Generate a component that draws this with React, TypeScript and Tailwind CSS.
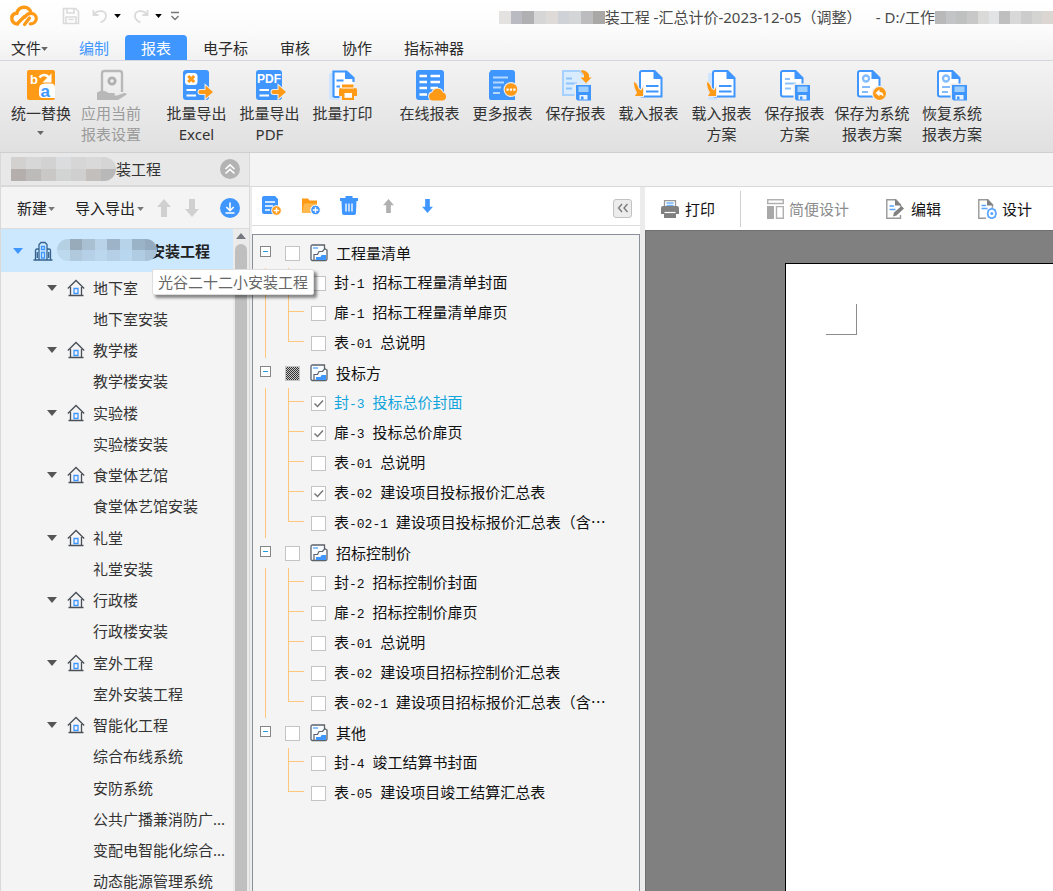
import type { ReactNode } from "react";

const BLUE = "#4096ff";
const ORANGE = "#ff9a16";

/* ---------- ribbon icons (32 x 32) ---------- */

function Icon32({ children }: { children: ReactNode }) {
  return (
    <svg viewBox="0 0 32 32" className="h-8 w-8 shrink-0" fill="none" aria-hidden="true">
      {children}
    </svg>
  );
}

function ExportArrow() {
  return (
    <path
      d="M19.500 21h5v-4.500l7.500 6.500-7.500 6.500V25h-5a2 2 0 0 1 0-4z"
      fill={ORANGE}
      stroke="#ececec"
      strokeWidth="2"
      paintOrder="stroke"
    />
  );
}

function Floppy({ x, y }: { x: number; y: number }) {
  return (
    <g transform={`translate(${x} ${y})`}>
      <path d="M-1.5-1.5h18v18h-18z" fill="#ebebeb" />
      <path d="M0 0h15v15.500H1.500L0 14z" fill={BLUE} />
      <path d="M2.500 1.500h10v5.500h-10z" fill="#9fcfff" />
      <path d="M3.500 10h8v4.500h-8z" fill="#e8f3ff" />
      <path d="M5 11.500h2.500v3H5z" fill={BLUE} />
    </g>
  );
}

function PageOutline({ x = 3 }: { x?: number }) {
  return (
    <g transform={`translate(${x} 0)`}>
      <path d="M4 2h12.500L23.500 9V27.500H4a2 2 0 0 1-2-2V4a2 2 0 0 1 2-2z" fill="#fff" stroke={BLUE} strokeWidth="2" />
      <path d="M15.500 1.500v8.500h9z" fill={BLUE} />
    </g>
  );
}

const IconReplace = () => (
  <Icon32>
    <rect x="2" y="1" width="28" height="30" rx="2" fill={ORANGE} />
    <text x="5" y="14.500" fontSize="13" fontWeight="700" fontFamily="Liberation Sans, sans-serif" fill="#fff">
      b
    </text>
    <path d="M14.500 8.500c2-3 6-3.500 9-.5" stroke="#fff" strokeWidth="2.600" />
    <path d="M26.500 4.500v9h-9z" fill="#fff" />
    <path d="M20 14.500h6q4 0 4 4V29H18q-4 0-4-4v-4.500q0-6 6-6z" fill="#fff" />
    <text x="15.500" y="27.500" fontSize="17" fontWeight="700" fontFamily="Liberation Sans, sans-serif" fill={BLUE}>
      a
    </text>
  </Icon32>
);

const IconApply = () => (
  <Icon32>
    <path d="M7 22V4.500Q7 2 9.500 2h15Q27 2 27 4.500V23" stroke="#b8b8b8" strokeWidth="2.400" />
    <circle cx="17" cy="12" r="3.200" stroke="#b0b0b0" strokeWidth="2.800" />
    <path
      d="M2 23.500c4-2.500 8-2 11.500.5h5.500q2 1.200 0 2.500h3l7-2.500q4 0 2 2L23 31H2z"
      fill="#b8b8b8"
    />
  </Icon32>
);

const IconExcel = () => (
  <Icon32>
    <rect x="2" y="1" width="26" height="30" rx="3" fill={BLUE} />
    <rect x="4" y="4" width="12.500" height="12" rx="3.500" fill="#fff" />
    <path d="M7.200 7l6 6M13.200 7l-6 6" stroke={ORANGE} strokeWidth="3" />
    <path d="M5.500 21H15M5.500 26.500H15" stroke="#fff" strokeWidth="2" />
    <ExportArrow />
  </Icon32>
);

const IconPdf = () => (
  <Icon32>
    <rect x="2" y="1" width="26" height="30" rx="3" fill={BLUE} />
    <text x="3" y="14" fontSize="12" fontWeight="700" fontFamily="Liberation Sans, sans-serif" fill="#fff">
      PDF
    </text>
    <path d="M5.500 21H15M5.500 26.500H15" stroke="#fff" strokeWidth="2" />
    <ExportArrow />
  </Icon32>
);

const IconPrint = () => (
  <Icon32>
    <path d="M3 4h9v27H5q-3 0-3-3V5z" fill="#cfe5ff" />
    <path d="M6 2.500h13.500L26.500 9v18H6z" fill="#fff" />
    <path d="M6.500 28V2.500h13L26.500 9v4M6.500 28h6" stroke={BLUE} strokeWidth="2.200" />
    <path d="M18 1.500V10h9z" fill={BLUE} />
    <path d="M9.500 11.500h7M9.500 17.500h3.500" stroke={BLUE} strokeWidth="2" />
    <path d="M15 15.500h11.500V19H28q2 0 2 2v6h-3v4H15v-4h-3v-6q0-2 2-2h1z" fill={ORANGE} />
    <path d="M14.500 19h12.500" stroke="#fff" strokeWidth="1" />
    <path d="M17.500 24h7.500v4.800h-7.500z" fill="#fff" />
  </Icon32>
);

const IconOnline = () => (
  <Icon32>
    <rect x="2" y="1" width="28" height="30" rx="3" fill={BLUE} />
    <path d="M5.500 7H13M16.500 7H26M5.500 13H13M16.500 13H26M5.500 19H13M16.500 19H24M5.500 25.500H13" stroke="#fff" strokeWidth="2.400" />
    <path
      d="M19 31.500a4 4 0 0 1-.8-7.900 5.600 5.600 0 0 1 10.600 0A4 4 0 0 1 28.500 31.500z"
      fill={ORANGE}
      stroke="#ececec"
      strokeWidth="2"
      paintOrder="stroke"
    />
  </Icon32>
);

const IconMore = () => (
  <Icon32>
    <path d="M4 1h21q3 0 3 3v27H4q-2 0-2-2V4l2-3z" fill={BLUE} />
    <path d="M6 8.500h15M6 13.500h11M6 18.500h8M6 24h7" stroke="#b5d8ff" strokeWidth="2" />
    <circle cx="24" cy="20.500" r="7.500" fill="#ececec" />
    <circle cx="24" cy="20.500" r="6.300" fill={ORANGE} />
    <path d="M19.500 19.500h2.200v2.200h-2.200zM22.900 19.500h2.200v2.200h-2.200zM26.300 19.500h2.200v2.200h-2.200z" fill="#fff" />
  </Icon32>
);

const IconSave = () => (
  <Icon32>
    <path d="M3 2h17l6 6v18H3z" fill="#d9ecff" stroke="#a6d0ff" strokeWidth="2" />
    <path d="M6 9.500h6M6 14.500h11M6 19.500h6" stroke="#8cc3ff" strokeWidth="2" />
    <path d="M22 1q8 1.500 7 7.500h2.500L26 14l-5.500-5.500H24q.5-4-3-6z" fill={ORANGE} stroke="#ececec" strokeWidth="1" paintOrder="stroke" />
    <Floppy x={16} y={16} />
  </Icon32>
);

const LoadArrow = () => (
  <path
    d="M1 13q3 1 4.500 6.500L8 21.500l2-3V27H2l2-3.500Q1 19 1 13z"
    fill={ORANGE}
    stroke="#ececec"
    strokeWidth="2"
    paintOrder="stroke"
  />
);

const IconLoad = () => (
  <Icon32>
    <PageOutline x={5} />
    <path d="M13 17h12.500M13 22.500h12.500" stroke={BLUE} strokeWidth="2.200" />
    <LoadArrow />
  </Icon32>
);

const IconLoadPlan = () => (
  <Icon32>
    <path d="M3 4h8v27H4q-2 0-2-2V5z" fill="#cfe5ff" />
    <PageOutline x={5} />
    <path d="M13 17h12.500M13 22.500h12.500" stroke={BLUE} strokeWidth="2.200" />
    <LoadArrow />
  </Icon32>
);

const IconSavePlan = () => (
  <Icon32>
    <PageOutline x={0} />
    <path d="M6 10h5M6 14.500h11M6 19.500h6" stroke="#8cc3ff" strokeWidth="2" />
    <Floppy x={16} y={16} />
  </Icon32>
);

const Dial = () => (
  <g stroke="#84bdff">
    <circle cx="10" cy="9.500" r="3" strokeWidth="2.300" />
    <path d="M6 18h8M6 23h6" strokeWidth="2" />
  </g>
);

const IconSaveSystem = () => (
  <Icon32>
    <PageOutline x={0} />
    <Dial />
    <circle cx="23.500" cy="24.500" r="7.800" fill="#ececec" />
    <circle cx="23.500" cy="24.500" r="6.500" fill={ORANGE} />
    <path d="M19.500 24l4-3.500v2.200q4 .3 4 4.800-1.500-2-4-1.800v1.800z" fill="#fff" />
  </Icon32>
);

const IconRestore = () => (
  <Icon32>
    <PageOutline x={0} />
    <Dial />
    <Floppy x={16} y={16} />
  </Icon32>
);

/* ---------- small shared pieces ---------- */

function Caret({ className }: { className: string }) {
  return (
    <svg viewBox="0 0 10 6" className={className} fill="currentColor" aria-hidden="true">
      <path d="M0 0h10L5 6z" />
    </svg>
  );
}

function Mosaic({ rows, className }: { rows: string[][]; className: string }) {
  return (
    <div className={className} aria-hidden="true">
      {rows.map((row, r) => (
        <div key={r} className="flex flex-1">
          {row.map((c, i) => (
            <div key={i} className="flex-1" style={{ backgroundColor: c }} />
          ))}
        </div>
      ))}
    </div>
  );
}

type Action = { icon: ReactNode; lines: string[]; disabled?: boolean; caret?: boolean };

function RibbonButton({ action, width }: { action: Action; width: string }) {
  return (
    <button
      type="button"
      disabled={action.disabled}
      className={`flex flex-col items-center gap-[2px] whitespace-nowrap pt-2 leading-[21px] ${width} ${
        action.disabled ? "text-[#9b9b9b]" : "text-[#333]"
      }`}
    >
      {action.icon}
      <span className="flex flex-col items-center">
        {action.lines.map((l) => (
          <span key={l}>{l}</span>
        ))}
        {action.caret && <Caret className="mt-[7px] h-1 w-[7px] text-[#666]" />}
      </span>
    </button>
  );
}

const setup: Action[] = [
  { icon: <IconReplace />, lines: ["统一替换"], caret: true },
  { icon: <IconApply />, lines: ["应用当前", "报表设置"], disabled: true },
];
const exporting: Action[] = [
  { icon: <IconExcel />, lines: ["批量导出", "Excel"] },
  { icon: <IconPdf />, lines: ["批量导出", "PDF"] },
  { icon: <IconPrint />, lines: ["批量打印"] },
];
const reports: Action[] = [
  { icon: <IconOnline />, lines: ["在线报表"] },
  { icon: <IconMore />, lines: ["更多报表"] },
  { icon: <IconSave />, lines: ["保存报表"] },
  { icon: <IconLoad />, lines: ["载入报表"] },
  { icon: <IconLoadPlan />, lines: ["载入报表", "方案"] },
  { icon: <IconSavePlan />, lines: ["保存报表", "方案"] },
];
const system: Action[] = [
  { icon: <IconSaveSystem />, lines: ["保存为系统", "报表方案"] },
  { icon: <IconRestore />, lines: ["恢复系统", "报表方案"] },
];

/* ---------- header ---------- */

function TitleBar() {
  return (
    <div className="flex h-8 items-center">
      <svg viewBox="0 0 28 22" className="ml-[10px] h-[22px] w-7" fill="none" stroke={ORANGE} strokeLinecap="round" aria-label="logo">
        <path
          d="M7.500 19C3.500 18.500 1.800 16 1.800 13.500c0-3 2-5 5-5.200C7.500 4.500 10.500 2.200 14 2.200c3.800 0 6.300 2.500 6.800 5.600"
          strokeWidth="3.400"
        />
        <path d="M7.500 18.500L14.500 11.500" strokeWidth="3.400" />
        <path
          d="M14.500 19.500l5-6.500M15 12c1.500-2.500 3.500-3.700 6-3.700 3 0 5.300 2.200 5.300 5.200 0 3.200-2.500 5.500-6 5.300"
          strokeWidth="3.200"
        />
      </svg>
      <button type="button" aria-label="保存" className="ml-6 text-[#dadada]">
        <svg viewBox="0 0 18 18" className="h-[18px] w-[18px]" fill="none" stroke="currentColor" strokeWidth="1.600">
          <path d="M1.500 1.500h12l3 3v12h-15zM5 2v4h7V2M4 16v-6h10v6M6.500 12.500h5" />
        </svg>
      </button>
      <button type="button" aria-label="撤销" className="ml-3 flex items-center gap-[6px] text-[#dadada]">
        <svg viewBox="0 0 16 16" className="h-4 w-4" fill="none" stroke="currentColor" strokeWidth="1.800">
          <path d="M1.500 2v5h5M2 7c3-5.500 12-5 12 1 0 3-2 5-5.500 6.500" />
        </svg>
        <Caret className="h-1 w-[7px] text-black" />
      </button>
      <button type="button" aria-label="重做" className="ml-3 flex items-center gap-[6px] text-[#dadada]">
        <svg viewBox="0 0 16 16" className="h-4 w-4" fill="none" stroke="currentColor" strokeWidth="1.800">
          <path d="M14.500 2v5h-5M14 7C11 1.500 2 2 2 8c0 3 2 5 5.500 6.500" />
        </svg>
        <Caret className="h-1 w-[7px] text-black" />
      </button>
      <button type="button" aria-label="自定义快速访问" className="ml-2 text-[#777]">
        <svg viewBox="0 0 10 10" className="h-[10px] w-[10px]" fill="none" stroke="currentColor" strokeWidth="1.400">
          <path d="M1 1.500h8M1.500 5L5 8.500 8.500 5" />
        </svg>
      </button>
      <div className="ml-auto flex items-center whitespace-nowrap pt-[2px] text-[#4a4a4a]">
        <Mosaic
          className="flex h-[13px] w-[106px] flex-col"
          rows={[["#e4e2e0", "#b9bac2", "#b0afb2", "#d6d6d6", "#dedad8", "#cfd3d8", "#d3d5d7", "#bcbcbe", "#a9a8a7"]]}
        />
        <h1 className="w-[271px]">装工程 -汇总计价-2023-12-05（调整）</h1>
        <span>- D:/工作</span>
        <Mosaic
          className="flex h-[13px] w-[118px] flex-col"
          rows={[["#b9b9ba", "#c3c4c6", "#bfc0c0", "#c8c8c8", "#dadad8", "#e2e3e4", "#bfbfbf", "#d8d8d9", "#cccccd", "#d4d4d2", "#dcd6d2"]]}
        />
      </div>
    </div>
  );
}

function MenuTabs() {
  return (
    <nav className="flex h-[29px] items-end border-b border-[#d4d8de] text-[#2b2b2b]">
      <button type="button" className="flex h-[25px] w-[63px] items-center pl-[11px]">
        文件
        <Caret className="mt-[2px] h-1 w-[7px] text-[#666]" />
      </button>
      <button type="button" className="h-[25px] px-4 text-[#4096ff]">编制</button>
      <button type="button" aria-current="page" className="h-[25px] rounded-t-[4px] bg-[#4096ff] px-4 text-white">
        报表
      </button>
      {["电子标", "审核", "协作", "指标神器"].map((t) => (
        <button key={t} type="button" className="h-[25px] px-4">
          {t}
        </button>
      ))}
    </nav>
  );
}

function Ribbon() {
  return (
    <div className="flex h-[92px] items-start border-b border-[#cfcfcf] bg-linear-to-b from-[#f3f3f3] to-[#e0e0e0] pl-[6px]">
      <div className="flex">{setup.map((a, i) => <RibbonButton key={i} action={a} width="w-[70px]" />)}</div>
      <div className="ml-[14px] flex">{exporting.map((a, i) => <RibbonButton key={i} action={a} width="w-[73px]" />)}</div>
      <div className="ml-[14px] flex">{reports.map((a, i) => <RibbonButton key={i} action={a} width="w-[73px]" />)}</div>
      <div className="ml-px flex">{system.map((a, i) => <RibbonButton key={i} action={a} width="w-20" />)}</div>
    </div>
  );
}

/* ---------- project tree (left) ---------- */

const projects: { name: string; parent?: boolean }[] = [
  { name: "地下室", parent: true },
  { name: "地下室安装" },
  { name: "教学楼", parent: true },
  { name: "教学楼安装" },
  { name: "实验楼", parent: true },
  { name: "实验楼安装" },
  { name: "食堂体艺馆", parent: true },
  { name: "食堂体艺馆安装" },
  { name: "礼堂", parent: true },
  { name: "礼堂安装" },
  { name: "行政楼", parent: true },
  { name: "行政楼安装" },
  { name: "室外工程", parent: true },
  { name: "室外安装工程" },
  { name: "智能化工程", parent: true },
  { name: "综合布线系统" },
  { name: "安防系统" },
  { name: "公共广播兼消防广..." },
  { name: "变配电智能化综合..." },
  { name: "动态能源管理系统" },
];

const HomeIcon = () => (
  <svg viewBox="0 0 18 18" className="h-[18px] w-[18px]" fill="none" aria-hidden="true">
    <path d="M.8 9.500L9 1.500l8.200 8M3.500 8v8.500M14.500 8v8.500M1.500 16.500h15" stroke="#4a4f57" strokeWidth="1.300" />
    <path d="M7 9.500h4v5H7z" stroke={BLUE} strokeWidth="1.300" />
  </svg>
);

const BuildingIcon = () => (
  <svg viewBox="0 0 20 20" className="h-5 w-5" fill="none" aria-hidden="true">
    <path d="M.5 19h19M2.500 19V9.500Q2.500 8 4 8h2M14 8h2q1.500 0 1.500 1.500V19M6 19V3.500L8 1.500h4l2 2V19M4.300 11v6M15.700 11v6" stroke="#35618f" strokeWidth="1.300" />
    <path d="M8.500 5.500h3v3h-3zM8.500 11.500h3v5.500h-3z" stroke={BLUE} strokeWidth="1.300" />
  </svg>
);

function BlockArrow({ down, className }: { down?: boolean; className: string }) {
  return (
    <svg viewBox="0 0 14 18" className={className} fill="currentColor" aria-hidden="true">
      {down ? <path d="M4 0h6v10h4l-7 8-7-8h4z" /> : <path d="M4 18h6V8h4L7 0 0 8h4z" />}
    </svg>
  );
}

function ProjectPanel() {
  return (
    <aside className="flex w-[250px] shrink-0 flex-col border-x border-[#d9d9d9] bg-[#f4f4f4]">
      <div className="flex h-[34px] shrink-0 items-center border-b-2 border-[#d9d9d9] bg-[#e8e8e8] pl-[10px] text-[#333]">
        <Mosaic
          className="flex h-6 w-[105px] flex-col overflow-hidden rounded-r-full"
          rows={[
            ["#d2d1d0", "#d7d7d7", "#d3d2d2", "#dbdcdd", "#d6d6d6", "#d9d9d9", "#d5d5d5"],
            ["#b4afac", "#bdbbb9", "#c9c8c7", "#d2d3d3", "#cfcfd0", "#c2bfbd", "#b9b8b8"],
          ]}
        />
        <span>装工程</span>
        <button type="button" aria-label="收起" className="ml-auto mr-[9px]">
          <svg viewBox="0 0 20 20" className="h-5 w-5" fill="none" aria-hidden="true">
            <circle cx="10" cy="10" r="10" fill="#b3b3b3" />
            <path d="M5.500 10L10 5.800l4.500 4.200M5.500 14.500L10 10.300l4.500 4.200" stroke="#fff" strokeWidth="1.600" />
          </svg>
        </button>
      </div>
      <div className="flex h-[42px] shrink-0 items-center border-b border-[#dcdcdc] pl-4 text-[#222]">
        <button type="button" className="flex items-center gap-px">
          新建
          <Caret className="mt-[2px] h-1 w-[7px] text-[#777]" />
        </button>
        <button type="button" className="ml-5 flex items-center gap-[2px]">
          导入导出
          <Caret className="mt-[2px] h-1 w-[7px] text-[#777]" />
        </button>
        <button type="button" aria-label="上移" className="ml-[13px] text-[#d0d0d0]"><BlockArrow className="h-[18px] w-[14px]" /></button>
        <button type="button" aria-label="下移" className="ml-[14px] text-[#d0d0d0]"><BlockArrow down className="h-[18px] w-[14px]" /></button>
        <button type="button" aria-label="下载" className="ml-auto mr-[9px]">
          <svg viewBox="0 0 20 20" className="h-5 w-5" fill="none" aria-hidden="true">
            <circle cx="10" cy="10" r="10" fill={BLUE} />
            <path d="M10 4.500v8M6.300 9l3.700 3.700L13.700 9M5.500 15h9" stroke="#fff" strokeWidth="1.600" />
          </svg>
        </button>
      </div>
      <div className="flex min-h-0 flex-1 overflow-hidden">
        <div className="min-w-0 flex-1">
          <div className="relative flex h-[43px] items-center bg-[#cce8ff] pl-3 font-bold text-[#222]">
            <Caret className="h-[6px] w-[10px] text-[#4096ff]" />
            <span className="ml-[10px]"><BuildingIcon /></span>
            <span className="ml-auto mr-[23px]">安装工程</span>
            <Mosaic
              className="absolute left-[56px] top-[10px] flex h-[22px] w-[100px] flex-col overflow-hidden rounded-full"
              rows={[
                ["#b5cfe3", "#98abbb", "#a9bfd2", "#b9d2e7", "#9db4c8", "#b7d3ea", "#9bb3c7", "#94abbf"],
                ["#bcd9ee", "#b0c9dd", "#b6d1e7", "#bad7ee", "#b4cfe6", "#b8d6ee", "#b0cce2", "#a9c2d8"],
              ]}
            />
          </div>
          <ul className="grid h-[625px] auto-rows-fr text-[#333]">
            {projects.map((p) => (
              <li key={p.name} className="flex items-center whitespace-nowrap">
                <span className="flex w-[92px] shrink-0 items-center pl-[46px]">
                  {p.parent && (
                    <>
                      <Caret className="h-[6px] w-[10px] text-[#555]" />
                      <span className="ml-[10px]"><HomeIcon /></span>
                    </>
                  )}
                </span>
                {p.name}
              </li>
            ))}
          </ul>
        </div>
        <div className="flex w-4 flex-col items-center bg-[#ebebeb] pt-1" aria-hidden="true">
          <svg viewBox="0 0 10 6" className="h-[6px] w-[10px]" fill="#75797f"><path d="M5 0l5 6H0z" /></svg>
          <div className="mt-[5px] w-3 flex-1 rounded-t-full bg-[#bfbfbf]" />
        </div>
      </div>
    </aside>
  );
}

/* ---------- report tree (middle) ---------- */

type Report = { head: string; code: string; title: string; checked?: boolean; active?: boolean };
type Group = { name: string; mixed?: boolean; items: Report[] };

const groups: Group[] = [
  {
    name: "工程量清单",
    items: [
      { head: "封", code: "-1", title: "招标工程量清单封面" },
      { head: "扉", code: "-1", title: "招标工程量清单扉页" },
      { head: "表", code: "-01", title: "总说明" },
    ],
  },
  {
    name: "投标方",
    mixed: true,
    items: [
      { head: "封", code: "-3", title: "投标总价封面", checked: true, active: true },
      { head: "扉", code: "-3", title: "投标总价扉页", checked: true },
      { head: "表", code: "-01", title: "总说明" },
      { head: "表", code: "-02", title: "建设项目投标报价汇总表", checked: true },
      { head: "表", code: "-02-1", title: "建设项目投标报价汇总表（含⋯" },
    ],
  },
  {
    name: "招标控制价",
    items: [
      { head: "封", code: "-2", title: "招标控制价封面" },
      { head: "扉", code: "-2", title: "招标控制价扉页" },
      { head: "表", code: "-01", title: "总说明" },
      { head: "表", code: "-02", title: "建设项目招标控制价汇总表" },
      { head: "表", code: "-02-1", title: "建设项目招标报价汇总表（含⋯" },
    ],
  },
  {
    name: "其他",
    items: [
      { head: "封", code: "-4", title: "竣工结算书封面" },
      { head: "表", code: "-05", title: "建设项目竣工结算汇总表" },
    ],
  },
];

function TickBox({ checked, mixed }: { checked?: boolean; mixed?: boolean }) {
  return (
    <span className="relative flex h-[15px] w-[15px] shrink-0">
      <input
        type="checkbox"
        defaultChecked={checked}
        className={`peer h-[15px] w-[15px] appearance-none border border-[#c4c4c4] ${
          mixed ? "bg-[repeating-conic-gradient(#333_0_25%,#c9c9c9_0_50%)] bg-[length:2px_2px]" : "bg-white"
        }`}
      />
      <svg
        viewBox="0 0 15 15"
        className="pointer-events-none absolute inset-0 hidden h-[15px] w-[15px] peer-checked:block"
        fill="none"
        stroke="#777"
        strokeWidth="1.500"
        aria-hidden="true"
      >
        <path d="M3.500 7.500l3 3 5.500-6" />
      </svg>
    </span>
  );
}

const ReportIcon = () => (
  <svg viewBox="0 0 18 18" className="h-[18px] w-[18px]" fill="none" aria-hidden="true">
    <path d="M1 2.500Q1 1 2.500 1H14.500v3.500L17 6v9q0 1.500-1.500 1.500h-13Q1 16.500 1 15z" fill="#f8fbff" stroke="#5c626a" strokeWidth="1.300" />
    <path d="M3 4h5" stroke="#8fc4ff" strokeWidth="2" />
    <path d="M4 16v-5.500h3.500L9 7.500h3.500L15 4.500" stroke="#5c626a" strokeWidth="1.200" />
    <path d="M6 16v-3h4.500l1-2H16v5z" fill={BLUE} />
  </svg>
);

function ReportPanel() {
  return (
    <section className="flex w-[388px] shrink-0 flex-col bg-white">
      <div className="flex h-[39px] shrink-0 items-center border-b border-[#dcdcdc] pl-[10px] pr-2">
        <button type="button" aria-label="新建报表">
          <svg viewBox="0 0 20 20" className="h-5 w-5" fill="none">
            <path d="M2 0h11l3 3v15H2q-2 0-2-2V2q0-2 2-2z" fill={BLUE} />
            <path d="M3 6h10M3 10h8M3 14h5" stroke="#fff" strokeWidth="1.300" />
            <circle cx="14.500" cy="14.500" r="4.800" fill={ORANGE} stroke="#fff" />
            <path d="M14.500 11.800v5.400M11.800 14.500h5.400" stroke="#fff" strokeWidth="1.400" />
          </svg>
        </button>
        <button type="button" aria-label="新建文件夹" className="ml-5">
          <svg viewBox="0 0 20 20" className="h-5 w-5" fill="none">
            <path d="M0 2.500h6l1.500 2H15V17H0z" fill={ORANGE} />
            <path d="M2 7.500h13V17H0z" fill="#ffb84d" />
            <circle cx="13.500" cy="14" r="4.800" fill={BLUE} stroke="#fff" />
            <path d="M13.500 11.300v5.400M10.800 14h5.400" stroke="#fff" strokeWidth="1.400" />
          </svg>
        </button>
        <button type="button" aria-label="删除" className="ml-[17px]">
          <svg viewBox="0 0 20 20" className="h-5 w-5" fill="none">
            <path d="M1 2h5.500V0h7v2H19v3H1z" fill={BLUE} />
            <path d="M2.500 5h15l-.5 12q0 2-2 2H5q-2 0-2-2z" fill={BLUE} />
            <path d="M7 7.500v8M10 7.500v8M13 7.500v8" stroke="#fff" strokeWidth="1.300" />
          </svg>
        </button>
        <button type="button" aria-label="上移" className="ml-6 text-[#b0b0b0]"><BlockArrow className="h-[14px] w-[11px]" /></button>
        <button type="button" aria-label="下移" className="ml-7 text-[#4096ff]"><BlockArrow down className="h-[14px] w-[11px]" /></button>
        <button
          type="button"
          aria-label="折叠面板"
          className="ml-auto mt-1 grid h-[19px] w-[19px] place-items-center rounded-[3px] border border-[#c2c2c2] bg-[#ececec]"
        >
          <svg viewBox="0 0 12 10" className="h-[10px] w-3" fill="none" stroke="#777" strokeWidth="1.300">
            <path d="M5 1L1.500 5 5 9M10.500 1L7 5l3.500 4" />
          </svg>
        </button>
      </div>
      <div className="mt-2 min-h-0 flex-1 overflow-hidden border border-b-0 border-[#8a8f99] bg-[#f4f4f4] pt-[3px] text-[#111]">
        {groups.map((g, gi) => (
          <div key={g.name}>
            <div className="flex h-[30px] items-center pl-[7px]">
              <button
                type="button"
                aria-label={`折叠${g.name}`}
                className="mb-[3px] grid h-[11px] w-[11px] place-items-center border border-[#858585] bg-white"
              >
                <span className="h-px w-[5px] bg-[#1e9be0]" />
              </button>
              <label className="ml-[14px] flex items-center">
                <TickBox mixed={g.mixed} />
                <span className="ml-[10px]"><ReportIcon /></span>
                <span className="ml-2">{g.name}</span>
              </label>
            </div>
            <div className="flex pl-3">
              <span className={`w-px ${gi < groups.length - 1 ? "bg-[#ffc67c]" : ""}`} aria-hidden="true" />
              <ul className="pl-[22px]">
                {g.items.map((it, i) => (
                  <li key={it.head + it.code} className="flex h-[30px] items-center">
                    <span className="flex h-[30px] w-4" aria-hidden="true">
                      <span className={`w-px bg-[#ffc67c] ${i < g.items.length - 1 ? "h-[30px]" : "h-[14px]"}`} />
                      <span className="mt-[13px] h-px flex-1 bg-[#ffc67c]" />
                    </span>
                    <label className={`ml-[7px] flex items-center whitespace-nowrap ${it.active ? "text-[#12a5dc]" : ""}`}>
                      <TickBox checked={it.checked} />
                      <span className="ml-2">
                        {it.head}
                        <span className="font-['Liberation_Mono',monospace] text-[13px]">{it.code} </span>
                        {it.title}
                      </span>
                    </label>
                  </li>
                ))}
              </ul>
            </div>
          </div>
        ))}
      </div>
    </section>
  );
}

/* ---------- preview (right) ---------- */

function PreviewPanel() {
  return (
    <main className="flex min-w-0 flex-1 flex-col">
      <div className="flex h-[43px] shrink-0 items-center overflow-hidden whitespace-nowrap bg-white pl-4 text-[#111]">
        <button type="button" className="flex items-center gap-[6px]">
          <svg viewBox="0 0 18 18" className="h-[18px] w-[18px]" fill="none" aria-hidden="true">
            <path d="M3.500 6V.7h11V6" stroke="#999" strokeWidth="1.300" />
            <path d="M5.500 3h7M5.500 5.500h7" stroke="#6fb1ff" strokeWidth="1.300" />
            <path d="M2 6h14q2 0 2 2v6h-3v4H3v-4H0V8q0-2 2-2z" fill="#808080" />
            <path d="M3.500 12.500h11" stroke="#fff" strokeWidth="1.200" />
          </svg>
          打印
        </button>
        <span className="ml-[25px] h-9 w-px bg-[#d0d0d0]" />
        <button type="button" disabled className="ml-[26px] flex items-center gap-[5px] text-[#8c8c8c]">
          <svg viewBox="0 0 17 20" className="h-5 w-[17px]" fill="none" stroke="#b0b0b0" strokeWidth="1.400" aria-hidden="true">
            <path d="M.7.700h15.600v3.800H.7zM9.500 7.600h6.800v11.700H9.500z" />
            <path d="M0 7h7v13H0z" fill="#a8a8a8" stroke="none" />
          </svg>
          简便设计
        </button>
        <button type="button" className="ml-[37px] flex items-center gap-[7px]">
          <svg viewBox="0 0 18 20" className="h-5 w-[18px]" fill="none" aria-hidden="true">
            <path d="M14.500 16v3.300H.8V.8h9l4.700 5v2" stroke="#999" strokeWidth="1.400" />
            <path d="M9 0v6.500h6.500z" fill="#808080" />
            <path d="M3.500 7H8M3.500 10.500h6" stroke="#5aa5ff" strokeWidth="1.500" />
            <path d="M7 17.500l1-4L15.500 7 18 9.500l-7.500 7z" fill="#808080" />
          </svg>
          编辑
        </button>
        <button type="button" className="ml-[37px] flex items-center gap-[5px]">
          <svg viewBox="0 0 19 20" className="h-5 w-[19px]" fill="none" aria-hidden="true">
            <path d="M8 19.300H.8V.8h9l4.700 5v3" stroke="#999" strokeWidth="1.400" />
            <path d="M9 0v6.500h6.500z" fill="#808080" />
            <path d="M3.500 6.500H8M3.500 9.500h6" stroke="#5aa5ff" strokeWidth="1.500" />
            <path d="M10.500 11.200l3.300-1.700 3.300 1.700.9 3.300-.9 3.300-3.300 1.700-3.300-1.700-.9-3.300z" stroke="#5aa5ff" strokeWidth="1.700" />
            <circle cx="13.800" cy="14.500" r="1.500" fill="#5aa5ff" />
          </svg>
          设计
        </button>
      </div>
      <div className="flex flex-1 border-l border-t border-[#6f6f6f] bg-[#808080] pl-[139px] pt-8">
        <div className="flex-1 border-l border-t border-black bg-white pl-10 pt-10">
          <div className="h-[31px] w-[31px] border-b border-r border-[#8c8c8c]" />
        </div>
      </div>
    </main>
  );
}

export default function App() {
  return (
    <div className="relative flex h-screen flex-col overflow-hidden bg-[#ececec] font-['Noto_Sans','Noto_Sans_CJK_SC',sans-serif] text-[15px] leading-5">
      <header className="shrink-0 bg-linear-to-b from-white via-[#fbfbfb] to-[#f1f1f1]">
        <TitleBar />
        <MenuTabs />
      </header>
      <Ribbon />
      <div className="flex min-h-0 flex-1">
        <ProjectPanel />
        <div className="flex min-w-0 flex-1 flex-col">
          <div className="h-[34px] shrink-0 border-b border-[#d9d9d9] bg-[#f4f4f4]" />
          <div className="flex min-h-0 flex-1 gap-[5px] pl-[2px]">
            <ReportPanel />
            <PreviewPanel />
          </div>
        </div>
      </div>
      <div
        role="tooltip"
        className="absolute left-[152px] top-[269px] whitespace-nowrap rounded-[2px] border border-[#dedede] bg-white px-[5px] py-[2px] text-[#666] shadow-[3px_3px_3px_rgba(0,0,0,0.45)]"
      >
        光谷二十二小安装工程
      </div>
    </div>
  );
}
